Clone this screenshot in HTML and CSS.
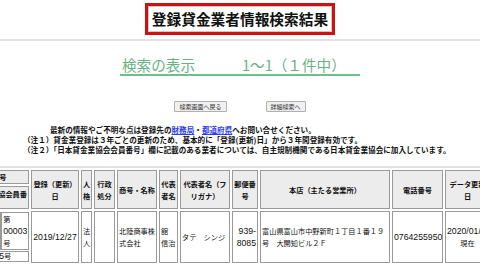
FILE: index.html
```html
<!DOCTYPE html>
<html lang="ja">
<head>
    <meta charset="UTF-8">
    <meta name="viewport" content="width=device-width, initial-scale=1.0">
    <title>登録貸金業者情報検索結果</title>
    <link rel="stylesheet" href="styles.css">
</head>
<body>
    <header class="page-head">
        <h1 class="page-title">登録貸金業者情報検索結果</h1>
    </header>
    <div class="rule"></div>

    <h2 class="count">検索の表示<span class="count-range">1〜1（１件中）</span></h2>

    <div class="actions">
        <button class="btn" type="button">検索画面へ戻る</button>
        <button class="btn" type="button">詳細検索へ</button>
    </div>

    <div class="notes">
        <p class="lead">最新の情報やご不明な点は登録先の<a href="#">財務局</a>・<a href="#">都道府県</a>へお問い合せください。</p>
        <p>（注１）貸金業登録は３年ごとの更新のため、基本的に「登録(更新)日」から３年間登録有効です。</p>
        <p>（注２）「日本貸金業協会会員番号」欄に記載のある業者については、自主規制機関である日本貸金業協会に加入しています。</p>
    </div>
    <div class="rule"></div>

    <div class="result">
        <table class="result-table">
            <thead>
                <tr class="row-top">
                    <th class="col-no left">番号</th>
                    <th class="col-date" rowspan="2">登録（更新）日</th>
                    <th class="col-kind" rowspan="2">人格</th>
                    <th class="col-admin" rowspan="2">行政処分</th>
                    <th class="col-name" rowspan="2">商号・名称</th>
                    <th class="col-rep" rowspan="2">代表者名</th>
                    <th class="col-kana" rowspan="2">代表者名（フリガナ）</th>
                    <th class="col-zip" rowspan="2">郵便番号</th>
                    <th class="col-addr" rowspan="2">本店（主たる営業所）</th>
                    <th class="col-tel" rowspan="2">電話番号</th>
                    <th class="col-upd" rowspan="2">データ更新日</th>
                </tr>
                <tr class="row-sub">
                    <th class="right top">協会員番</th>
                </tr>
            </thead>
            <tbody>
                <tr class="row-data">
                    <td class="cell-nest">
                        <table class="nest">
                            <tr class="nest-main">
                                <td class="nest-side">１</td>
                                <td>第<br><span class="num">00003</span><br>号</td>
                            </tr>
                            <tr class="nest-foot">
                                <td class="left" colspan="2">第<span class="num">5</span>号</td>
                            </tr>
                        </table>
                    </td>
                    <td><span class="num">2019/12/27</span></td>
                    <td>法人</td>
                    <td></td>
                    <td class="left">北陸商事株式会社</td>
                    <td class="left">舘　信治</td>
                    <td class="left">タテ　シンジ</td>
                    <td class="right"><span class="num">939-8085</span></td>
                    <td class="left">富山県富山市中野新町１丁目１番１９号　大開知ビル２Ｆ</td>
                    <td><span class="num">0764255950</span></td>
                    <td><span class="num">2020/01/31</span>現在</td>
                </tr>
            </tbody>
        </table>
    </div>
</body>
</html>
```

FILE: styles.css
```css
body {
    margin: 0;
    font-family: "Noto Sans CJK JP", sans-serif;
    color: #111;
    background: #fff;
}

/* タイトル */
.page-head {
    padding-top: 3px;
    text-align: center;
}
.page-title {
    display: inline-block;
    margin: 0;
    padding: 0 4px;
    border: 3px solid #d10f0f;
    box-shadow: inset 0 0 0 1px #c9c9c9;
    font-size: 14.7px;
    line-height: 26px;
    font-weight: bold;
    color: #111;
}

.rule {
    height: 2px;
    margin-top: 4px;
    background: #e2e2e2;
}

/* 件数 */
.count {
    width: 238px;
    margin: 15px auto 0;
    padding-left: 2px;
    border-bottom: 2px solid #6cc08c;
    font-size: 14.6px;
    line-height: 18px;
    font-weight: normal;
    color: #67b285;
}
.count-range {
    margin-left: 47px;
}

/* ボタン */
.actions {
    display: flex;
    justify-content: center;
    gap: 39px;
    margin-top: 25px;
}
.btn {
    height: 11px;
    padding: 0 4px;
    border: 1px solid #b0b0b0;
    border-radius: 1px;
    background: #f0f0f0;
    font-family: "Noto Sans CJK JP", sans-serif;
    font-size: 6px;
    line-height: 9px;
    color: #333;
}

/* 注意書き */
.notes {
    margin-top: 13px;
    padding-left: 23px;
    font-size: 7.6px;
    line-height: 10px;
    font-weight: bold;
    white-space: nowrap;
}
.notes p {
    margin: 0;
}
.notes .lead {
    padding-left: 27px;
}
.notes a {
    color: #2f3bf0;
    text-decoration: underline;
}
.notes + .rule {
    margin-top: 11px;
}

/* 検索結果テーブル */
.result {
    display: flex;
    justify-content: center;
    overflow: hidden;
}
.result-table {
    flex: none;
    width: 504px;
    table-layout: fixed;
    border-collapse: separate;
    border-spacing: 2px;
    font-size: 7.2px;
    line-height: 12px;
}
.result-table th,
.result-table td {
    box-sizing: border-box;
    padding: 0 1px;
    border: 1px solid #9a9a9a;
    text-align: center;
    vertical-align: middle;
    overflow: hidden;
}
.result-table th {
    background: #ececec;
    font-weight: bold;
}
.result-table td {
    background: #fff;
}
.result-table .left {
    text-align: left;
}
.result-table .right {
    text-align: right;
}
.result-table .top {
    vertical-align: top;
    padding-top: 1px;
}

.row-top th {
    height: 13px;
}
.row-sub th {
    height: 23px;
}
.row-data td {
    height: 48px;
}

.col-no { width: 39px; }
.col-date { width: 48px; }
.col-kind { width: 11px; }
.col-admin { width: 21px; }
.col-name { width: 40px; }
.col-rep { width: 19px; }
.col-kana { width: 50px; }
.col-zip { width: 26px; }
.col-addr { width: 130px; }
.col-tel { width: 51px; }
.col-upd { width: 45px; }

.num {
    font-family: "Liberation Sans", sans-serif;
    font-size: 8.7px;
}

/* 会員番号欄の入れ子 */
.result-table .cell-nest {
    padding: 0;
    border: none;
    vertical-align: top;
}
.nest {
    width: 100%;
    border-collapse: separate;
    border-spacing: 0 1px;
}
.result-table .nest td {
    height: auto;
    padding: 0 1px;
}
.nest-main td {
    height: 36px;
    text-align: left;
}
.result-table .nest .nest-side {
    width: 12px;
    color: #fff;
}
.nest-foot td {
    line-height: 9px;
}
```
